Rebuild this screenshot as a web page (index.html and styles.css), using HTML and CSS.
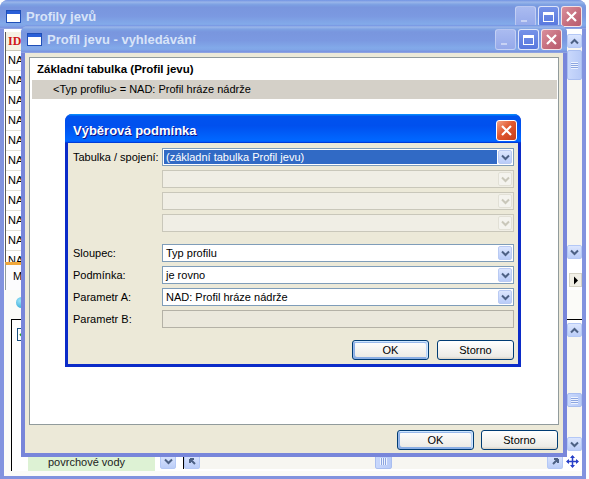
FILE: index.html
```html
<!DOCTYPE html>
<html lang="cs">
<head>
<meta charset="utf-8">
<title>Profil jevu</title>
<link rel="stylesheet" href="styles.css">
</head>
<body>

<div class="win back-win">
  <div class="tbar inactive">
    <span class="appicon"><svg width="15" height="13" viewBox="0 0 15 13"><rect x="0.5" y="0.5" width="14" height="12" fill="#fff" stroke="#1F4FB8"/><rect x="1" y="1" width="13" height="3" fill="#2A5FD8"/></svg></span>
    <span class="ttl">Profily jevů</span>
    <span class="tbtns">
      <span class="tb tb-min"></span>
      <span class="tb tb-max"><span class="maxbox"></span></span>
      <span class="tb tb-close"><svg width="13" height="13" viewBox="0 0 13 13"><path d="M2 2 L11 11 M11 2 L2 11" stroke="#fff" stroke-width="2.2"/></svg></span>
    </span>
  </div>
  <div class="wbody bb">
    <div class="bb-upper">
      <div class="grid">
        <div class="ghead">ID</div>
        <div class="grow">NA</div>
        <div class="grow">NA</div>
        <div class="grow">NA</div>
        <div class="grow">NA</div>
        <div class="grow">NA</div>
        <div class="grow">NA</div>
        <div class="grow">NA</div>
        <div class="grow">NA</div>
        <div class="grow">NA</div>
        <div class="grow">NA</div>
        <div class="grow">NA</div>
      </div>
      <div class="vscroll vs-upper">
        <span class="sb"><svg width="9" height="7" viewBox="0 0 9 7"><path d="M1 5.5 L4.5 2 L8 5.5" fill="none" stroke="#4D6185" stroke-width="2"/></svg></span>
        <span class="sb-thumb t1"><span class="grips"></span></span>
        <span class="sb-track"></span>
        <span class="sb"><svg width="9" height="7" viewBox="0 0 9 7"><path d="M1 1.5 L4.5 5 L8 1.5" fill="none" stroke="#4D6185" stroke-width="2"/></svg></span>
      </div>
    </div>
    <div class="bb-tabs">
      <span class="tab">M</span>
      <span class="tabs-fill"></span>
      <span class="tab-arrow"><svg width="6" height="9" viewBox="0 0 6 9"><path d="M1 0.5 L5 4.5 L1 8.5 Z" fill="#000"/></svg></span>
    </div>
    <div class="bb-lower">
      <div class="lower-top"><span class="globe"></span></div>
      <div class="listbox">
        <div class="list-main">
          <div class="list-content"><span class="chk"><svg width="11" height="11" viewBox="0 0 11 11"><path d="M2 5 L4.5 7.5 L9 2.5" fill="none" stroke="#21A121" stroke-width="2"/></svg></span></div>
          <div class="vscroll vs-lower">
            <span class="sb"><svg width="9" height="7" viewBox="0 0 9 7"><path d="M1 5.5 L4.5 2 L8 5.5" fill="none" stroke="#4D6185" stroke-width="2"/></svg></span>
            <span class="sb-track tr-fixed"></span>
            <span class="sb-thumb t2"><span class="grips"></span></span>
            <span class="sb-track"></span>
            <span class="sb"><svg width="9" height="7" viewBox="0 0 9 7"><path d="M1 1.5 L4.5 5 L8 1.5" fill="none" stroke="#4D6185" stroke-width="2"/></svg></span>
          </div>
        </div>
        <div class="list-bottom">
          <span class="green">povrchové vody</span>
          <span class="sb dd-small"><svg width="9" height="7" viewBox="0 0 9 7"><path d="M1 1.5 L4.5 5 L8 1.5" fill="none" stroke="#4D6185" stroke-width="2"/></svg></span>
          <div class="hscroll">
            <span class="sb hb"><svg width="9" height="9" viewBox="0 0 9 9"><path d="M7 7 L2 2 M2 2 L2 6 M2 2 L6 2" fill="none" stroke="#4D6185" stroke-width="2"/></svg></span>
            <span class="hs-track ht-fixed"></span>
            <span class="sb-thumb h"><span class="hgrips"></span></span>
            <span class="hs-track"></span>
            <span class="sb hb"><svg width="9" height="9" viewBox="0 0 9 9"><path d="M2 7 L7 2 M7 2 L3 2 M7 2 L7 6" fill="none" stroke="#4D6185" stroke-width="2"/></svg></span>
          </div>
          <span class="grip"><svg width="13" height="13" viewBox="0 0 13 13"><path d="M6.5 1 L6.5 12 M1 6.5 L12 6.5" stroke="#2840C8" stroke-width="1.5"/><path d="M6.5 0 L4 3 L9 3 Z M6.5 13 L4 10 L9 10 Z M0 6.5 L3 4 L3 9 Z M13 6.5 L10 4 L10 9 Z" fill="#2840C8"/></svg></span>
        </div>
      </div>
    </div>
  </div>
</div>

<div class="win mid-win">
  <div class="tbar inactive">
    <span class="appicon"><svg width="15" height="13" viewBox="0 0 15 13"><rect x="0.5" y="0.5" width="14" height="12" fill="#fff" stroke="#1F4FB8"/><rect x="1" y="1" width="13" height="3" fill="#2A5FD8"/></svg></span>
    <span class="ttl">Profil jevu - vyhledávání</span>
    <span class="tbtns">
      <span class="tb tb-min"></span>
      <span class="tb tb-max"><span class="maxbox"></span></span>
      <span class="tb tb-close"><svg width="13" height="13" viewBox="0 0 13 13"><path d="M2 2 L11 11 M11 2 L2 11" stroke="#fff" stroke-width="2.2"/></svg></span>
    </span>
  </div>
  <div class="wbody mb">
    <div class="panel">
      <div class="p-head">Základní tabulka (Profil jevu)</div>
      <div class="p-cond">&lt;Typ profilu&gt; = NAD: Profil hráze nádrže</div>
    </div>
    <div class="btnrow mid-btns">
      <button class="btn def">OK</button>
      <button class="btn">Storno</button>
    </div>
  </div>
</div>

<div class="win dlg">
  <div class="tbar active">
    <span class="ttl">Výběrová podmínka</span>
    <span class="tbtns">
      <span class="tb tb-close act"><svg width="13" height="13" viewBox="0 0 13 13"><path d="M2 2 L11 11 M11 2 L2 11" stroke="#fff" stroke-width="2.2"/></svg></span>
    </span>
  </div>
  <div class="wbody db">
    <div class="rgroup">
      <div class="frow"><span class="flabel">Tabulka / spojení:</span><span class="combo sel"><span class="cval">(základní tabulka Profil jevu)</span><span class="dd"><svg width="9" height="7" viewBox="0 0 9 7"><path d="M1 1.5 L4.5 5 L8 1.5" fill="none" stroke="#4D6185" stroke-width="2"/></svg></span></span></div>
      <div class="frow"><span class="flabel"></span><span class="combo dis"><span class="cval"></span><span class="dd"><svg width="9" height="7" viewBox="0 0 9 7"><path d="M1 1.5 L4.5 5 L8 1.5" fill="none" stroke="#C9C7BA" stroke-width="2"/></svg></span></span></div>
      <div class="frow"><span class="flabel"></span><span class="combo dis"><span class="cval"></span><span class="dd"><svg width="9" height="7" viewBox="0 0 9 7"><path d="M1 1.5 L4.5 5 L8 1.5" fill="none" stroke="#C9C7BA" stroke-width="2"/></svg></span></span></div>
      <div class="frow"><span class="flabel"></span><span class="combo dis"><span class="cval"></span><span class="dd"><svg width="9" height="7" viewBox="0 0 9 7"><path d="M1 1.5 L4.5 5 L8 1.5" fill="none" stroke="#C9C7BA" stroke-width="2"/></svg></span></span></div>
    </div>
    <div class="rgroup">
      <div class="frow"><span class="flabel">Sloupec:</span><span class="combo"><span class="cval">Typ profilu</span><span class="dd"><svg width="9" height="7" viewBox="0 0 9 7"><path d="M1 1.5 L4.5 5 L8 1.5" fill="none" stroke="#4D6185" stroke-width="2"/></svg></span></span></div>
      <div class="frow"><span class="flabel">Podmínka:</span><span class="combo"><span class="cval">je rovno</span><span class="dd"><svg width="9" height="7" viewBox="0 0 9 7"><path d="M1 1.5 L4.5 5 L8 1.5" fill="none" stroke="#4D6185" stroke-width="2"/></svg></span></span></div>
      <div class="frow"><span class="flabel">Parametr A:</span><span class="combo"><span class="cval">NAD: Profil hráze nádrže</span><span class="dd"><svg width="9" height="7" viewBox="0 0 9 7"><path d="M1 1.5 L4.5 5 L8 1.5" fill="none" stroke="#4D6185" stroke-width="2"/></svg></span></span></div>
      <div class="frow"><span class="flabel">Parametr B:</span><span class="tbox dis"></span></div>
    </div>
    <div class="btnrow dlg-btns">
      <button class="btn def">OK</button>
      <button class="btn">Storno</button>
    </div>
  </div>
</div>

</body>
</html>
```

FILE: styles.css
```css
* { box-sizing: border-box; }
html, body { margin: 0; padding: 0; }
body {
  width: 589px;
  height: 479px;
  overflow: hidden;
  position: relative;
  background: #ffffff;
  font-family: "Liberation Sans", Arial, sans-serif;
  font-size: 11px;
  color: #000;
}

/* ---------- windows ---------- */
.win {
  position: absolute;
  display: flex;
  flex-direction: column;
  border-radius: 8px 8px 0 0;
  overflow: hidden;
}
.back-win { left: 0; top: 0; width: 586px; height: 479px; background: #8293DF; }
.mid-win { left: 21px; top: 25px; width: 546px; height: 432px; background: #7886DA; }
.dlg { left: 65px; top: 114px; width: 456px; height: 253px; background: #0B2BC8; border-radius: 7px 7px 0 0; }

.tbar {
  display: flex;
  align-items: center;
  flex: none;
  font-weight: bold;
  font-size: 13px;
  white-space: nowrap;
}
.tbar.inactive {
  background: linear-gradient(180deg, #7697e7, #7e9ee3 3%, #94afe8 6%, #97b4e9 8%, #82a5e4 14%, #7c9fe2 17%, #7996de 25%, #7b99e1 56%, #82a9e9 81%, #80a5e7 89%, #7b96e1 94%, #7a93df 97%, #abbae3);
  color: #D8E4F8;
}
.tbar.active {
  background: linear-gradient(180deg, #0997ff, #0053ee 8%, #0050ee 40%, #0066ff 88%, #0066ff 93%, #005bff 95%, #003dd7 96%, #003dd7);
  color: #fff;
  text-shadow: 1px 1px #0F1089;
}
.back-win .tbar { height: 29px; padding: 4px 4px 0 6px; }
.mid-win .tbar { height: 28px; padding: 1px 5px 0 6px; }
.dlg .tbar { height: 29px; padding: 4px 4px 0 8px; }

.appicon { display: flex; width: 15px; height: 13px; margin-right: 5px; flex: none; }
.ttl { flex: 1; }
.tbtns { display: flex; gap: 2px; }
.tb {
  width: 21px;
  height: 21px;
  border-radius: 3px;
  display: flex;
  align-items: center;
  justify-content: center;
  border: 1px solid rgba(255, 255, 255, 0.55);
  position: relative;
}
.tb-min { background: linear-gradient(#aabbf0, #95a9ea); border-color: rgba(255,255,255,0.35); }
.tb-min::after {
  content: "";
  position: absolute;
  left: 5px;
  bottom: 4px;
  width: 6px;
  height: 2px;
  background: rgba(255,255,255,0.45);
}
.tb-max { background: linear-gradient(#7592e8, #5878de); border-color: rgba(255,255,255,0.8); }
.maxbox { width: 11px; height: 10px; border: 1px solid #fff; border-top-width: 3px; }
.tb-close { background: linear-gradient(135deg, #d98f9c, #c46c7c 60%, #b95c6e); border-color: rgba(255,255,255,0.8); }
.tb-close.act { background: linear-gradient(135deg, #f6a585, #e0582f 45%, #c53d1b); border-color: #fff; }

.wbody { flex: 1; display: flex; flex-direction: column; }

/* ---------- back window body ---------- */
.bb { margin: 0 4px 3px; background: #fff; }
.bb-upper { height: 233px; flex: none; display: flex; padding-top: 3px; }
.grid {
  flex: 1;
  margin-left: 1px;
  border-left: 1px solid #5a5a5a;
  display: flex;
  flex-direction: column;
  overflow: hidden;
}
.ghead {
  height: 19px;
  flex: none;
  background: #F4F1E4;
  border-bottom: 1px solid #CBC7B8;
  color: #D01818;
  font-family: "Liberation Serif", serif;
  font-weight: bold;
  font-size: 12px;
  line-height: 18px;
  padding-left: 2px;
}
.grow {
  height: 20px;
  flex: none;
  border-bottom: 1px solid #E2E0D8;
  padding-left: 2px;
  line-height: 19px;
}

.vscroll { width: 15px; flex: none; display: flex; flex-direction: column; background: #F7F6F1; }
.vs-upper { margin: 2px 0 3px; }
.vs-lower { margin: 3px 0 1px; }
.sb {
  height: 14px;
  flex: none;
  display: flex;
  align-items: center;
  justify-content: center;
  border: 1px solid #B4C8F6;
  border-radius: 2px;
  background: linear-gradient(#DCE6FE, #BBCDF8);
}
.sb-track { flex: 1; }
.tr-fixed { flex: none; height: 56px; }
.sb-thumb {
  flex: none;
  border: 1px solid #A9BEF0;
  border-radius: 2px;
  background: linear-gradient(90deg, #C9D8FC, #B7CAF7);
  display: flex;
  align-items: center;
  justify-content: center;
}
.t1 { height: 30px; margin-top: 2px; }
.t2 { height: 14px; }
.grips { width: 7px; height: 7px; background: repeating-linear-gradient(#EEF3FE 0 1px, #8CA5E0 1px 2px); }

.bb-tabs { height: 28px; flex: none; display: flex; align-items: flex-start; background: #fff; }
.tab {
  width: 40px;
  height: 28px;
  margin-left: 1px;
  border-top: 3px solid #F1A73A;
  border-left: 1px solid #919B9C;
  padding: 5px 0 0 7px;
  background: #FCFCFE;
}
.tabs-fill { flex: 1; }
.tab-arrow {
  width: 13px;
  height: 14px;
  margin-top: 11px;
  display: flex;
  align-items: center;
  justify-content: center;
  background: #F1EFE6;
  border: 1px solid #D5D2C5;
}

.bb-lower { flex: 1; display: flex; flex-direction: column; padding-bottom: 5px; background: #FBFBF8; }
.lower-top { height: 29px; flex: none; padding: 7px 0 0 12px; }
.globe { display: block; width: 11px; height: 11px; border-radius: 50%; background: radial-gradient(circle at 35% 35%, #9BE3F8, #1C9BD0); }
.listbox {
  flex: 1;
  margin-left: 7px;
  border-left: 1px solid #000;
  border-top: 1px solid #000;
  display: flex;
  flex-direction: column;
  background: #fff;
}
.list-main { flex: 1; display: flex; }
.list-content { flex: 1; padding: 8px 0 0 5px; }
.chk { display: flex; width: 13px; height: 13px; border: 1px solid #1C5180; background: #fff; align-items: center; justify-content: center; }
.list-bottom { height: 19px; flex: none; display: flex; align-items: center; }
.green {
  margin-left: 16px;
  width: 127px;
  height: 18px;
  background: #DDF2D4;
  padding-left: 20px;
  line-height: 18px;
  color: #222;
  flex: none;
}
.dd-small { width: 16px; height: 15px; margin-left: 5px; }
.hscroll { flex: 1; margin-left: 7px; height: 15px; display: flex; border-left: 1px solid #000; background: #F7F6F1; }
.hb { width: 16px; height: 15px; }
.hs-track { flex: 1; }
.ht-fixed { flex: none; width: 175px; }
.sb-thumb.h { width: 17px; height: 15px; }
.hgrips { width: 7px; height: 7px; background: repeating-linear-gradient(90deg, #EEF3FE 0 1px, #8CA5E0 1px 2px); }
.grip { width: 19px; height: 15px; display: flex; align-items: center; justify-content: center; flex: none; }

/* ---------- middle window body ---------- */
.mb { margin: 0 4px 4px; background: #ECE9D8; padding: 4px 4px 3px 4px; }
.panel { flex: 1; background: #fff; border: 1px solid #919B9C; display: flex; flex-direction: column; }
.p-head { height: 22px; flex: none; padding: 1px 0 0 7px; line-height: 21px; font-weight: bold; font-size: 11.5px; }
.p-cond { height: 19px; flex: none; margin: 0 1px 0 2px; background: #D4D0C8; padding-left: 21px; line-height: 19px; }

.btnrow { display: flex; justify-content: flex-end; height: 20px; flex: none; }
.mid-btns { margin-top: 5px; gap: 7px; padding-right: 1px; }
.dlg-btns { margin-top: 12px; gap: 8px; }
.btn {
  width: 77px;
  height: 20px;
  padding: 0;
  font-family: "Liberation Sans", Arial, sans-serif;
  font-size: 11px;
  color: #000;
  background: linear-gradient(180deg, #fff, #ecebe6 86%, #d6d0c5);
  border: 1px solid #003c74;
  border-radius: 3px;
}
.btn.def {
  box-shadow: inset -1px 1px #cee7ff, inset 1px 2px #98b8ea, inset -2px 2px #bcd4f6, inset 1px -1px #89ade4, inset 2px -2px #89ade4;
}

/* ---------- dialog body ---------- */
.db { margin: 0 3px 3px; background: #ECE9D8; padding: 5px 4px 4px 5px; }
.rgroup { display: flex; flex-direction: column; gap: 4px; }
.rgroup + .rgroup { margin-top: 12px; }
.frow { display: flex; align-items: center; height: 18px; }
.flabel { width: 89px; flex: none; }
.combo {
  flex: 1;
  height: 18px;
  border: 1px solid #7F9DB9;
  background: #fff;
  padding: 1px;
  display: flex;
}
.cval { flex: 1; padding-left: 2px; line-height: 14px; white-space: nowrap; }
.combo.sel .cval { background: #316AC5; color: #fff; }
.dd {
  width: 14px;
  flex: none;
  margin-left: 1px;
  border: 1px solid #B9CAF3;
  border-radius: 2px;
  background: linear-gradient(#DCE6FE, #B9CCF8);
  display: flex;
  align-items: center;
  justify-content: center;
}
.combo.dis { border-color: #C9C7BA; background: #F0EEE5; }
.combo.dis .dd { background: #F4F3EE; border-color: #E2E0D6; }
.tbox.dis { flex: 1; height: 18px; border: 1px solid #B4B1A6; background: #EBE8DC; }
```
